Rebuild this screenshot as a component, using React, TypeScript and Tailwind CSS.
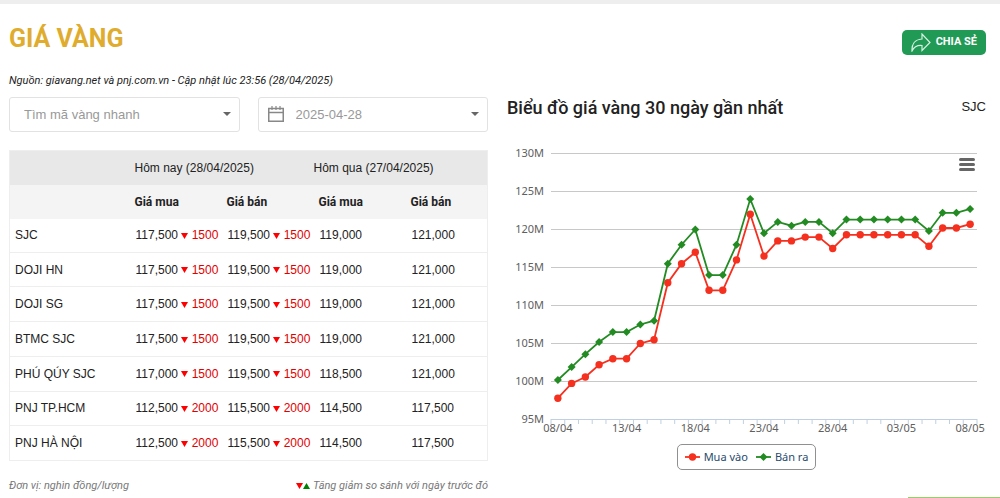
import { useState } from "react";

const GOLD = [
  { name: "SJC", buy: "117,500", sell: "119,500", diff: 1500, oldBuy: "119,000", oldSell: "121,000" },
  { name: "DOJI HN", buy: "117,500", sell: "119,500", diff: 1500, oldBuy: "119,000", oldSell: "121,000" },
  { name: "DOJI SG", buy: "117,500", sell: "119,500", diff: 1500, oldBuy: "119,000", oldSell: "121,000" },
  { name: "BTMC SJC", buy: "117,500", sell: "119,500", diff: 1500, oldBuy: "119,000", oldSell: "121,000" },
  { name: "PHÚ QÚY SJC", buy: "117,000", sell: "119,500", diff: 1500, oldBuy: "118,500", oldSell: "121,000" },
  { name: "PNJ TP.HCM", buy: "112,500", sell: "115,500", diff: 2000, oldBuy: "114,500", oldSell: "117,500" },
  { name: "PNJ HÀ NỘI", buy: "112,500", sell: "115,500", diff: 2000, oldBuy: "114,500", oldSell: "117,500" },
];

const BUY = [
  97.8, 99.75, 100.6, 102.2, 103, 103, 105, 105.5, 113, 115.5, 117, 112, 112, 116, 122, 116.5, 118.5,
  118.5, 119, 119, 117.5, 119.3, 119.3, 119.3, 119.3, 119.3, 119.3, 117.8, 120.2, 120.2, 120.7,
];
const SELL = [
  100.2, 101.9, 103.6, 105.2, 106.5, 106.5, 107.5, 108, 115.5, 118, 120, 114, 114, 118, 124, 119.5, 121,
  120.5, 121, 121, 119.5, 121.3, 121.3, 121.3, 121.3, 121.3, 121.3, 119.8, 122.2, 122.2, 122.7,
];
const LEVELS = [130, 125, 120, 115, 110, 105, 100, 95];
const DAYS = ["08/04", "13/04", "18/04", "23/04", "28/04", "03/05", "08/05"];

const LEFT = 44;
const WIDTH = 426;
const STEP = WIDTH / BUY.length;
const px = (i: number) => LEFT + STEP * (i + 0.5);
const py = (value: number) => 13.5 + (130 - value) * 7.6;
const line = (data: number[]) => data.map((v, i) => `${px(i)},${py(v)}`).join(" ");

const Diamond = ({ x, y }: { x: number; y: number }) => (
  <path d={`M${x} ${y - 4}l4 4l-4 4l-4 -4z`} fill="#228b22" />
);

const Down = () => (
  <svg viewBox="0 0 7 6" className="inline-block w-[7px] h-[6px]" aria-hidden="true">
    <path d="M0 0h7L3.5 6z" fill="#f00" />
  </svg>
);

const Up = () => (
  <svg viewBox="0 0 7 6" className="inline-block w-[7px] h-[6px]" aria-hidden="true">
    <path d="M0 6h7L3.5 0z" fill="green" />
  </svg>
);

const Caret = () => (
  <svg viewBox="0 0 8 4" className="absolute right-[9px] top-[15px] w-2 h-1 pointer-events-none">
    <path d="M0 0h8L4 4z" fill="#666" />
  </svg>
);

const Price = ({ value, diff }: { value: string; diff: number }) => (
  <td className="pl-[6px] whitespace-nowrap">
    {value} <Down /> <span className="text-[#e00000]">{diff}</span>
  </td>
);

const Filters = () => {
  const [code, setCode] = useState("");
  const [date, setDate] = useState("2025-04-28");
  return (
    <div className="grid grid-cols-2 gap-[18px] mt-2">
      <div className="relative">
        <select
          aria-label="Tìm mã vàng nhanh"
          value={code}
          onChange={(e) => setCode(e.target.value)}
          className="appearance-none w-full h-[35px] pl-[14px] border border-[#e2e2e2] rounded-[3px] bg-white text-[13px] text-[#999]"
        >
          <option value="">Tìm mã vàng nhanh</option>
          {GOLD.map((item) => (
            <option key={item.name}>{item.name}</option>
          ))}
        </select>
        <Caret />
      </div>
      <div className="relative">
        <svg viewBox="0 0 16 16" className="absolute left-[10px] top-[9px] size-4" fill="none" stroke="#888">
          <path d="M0.75 2.5h14.5v12.75H0.75z" strokeWidth="1.5" />
          <path d="M1 6.5h14" strokeWidth="1.5" />
          <path d="M4 0v4M8 0v4M12 0v4" strokeWidth="1.2" />
        </svg>
        <select
          aria-label="Ngày"
          value={date}
          onChange={(e) => setDate(e.target.value)}
          className="appearance-none w-full h-[35px] pl-[37px] border border-[#e2e2e2] rounded-[3px] bg-transparent text-[13px] text-[#999]"
        >
          <option>2025-04-28</option>
          <option>2025-04-27</option>
        </select>
        <Caret />
      </div>
    </div>
  );
};

const GoldTable = () => (
  <table className="table-fixed w-full h-[311px] mt-[18px] text-left text-xs text-[#222] border border-[#eee]">
    <colgroup>
      <col className="w-[120px]" />
      <col className="w-[92px]" />
      <col className="w-[92px]" />
      <col className="w-[92px]" />
      <col />
    </colgroup>
    <thead>
      <tr className="h-[34px] bg-[#e8e8e8]">
        <td></td>
        <th colSpan={2} className="pl-[5px] font-normal">Hôm nay (28/04/2025)</th>
        <th colSpan={2} className="font-normal">Hôm qua (27/04/2025)</th>
      </tr>
      <tr className="h-[34px] bg-[#f4f4f4] font-[Roboto]">
        <td></td>
        <th className="pl-[5px]">Giá mua</th>
        <th className="pl-[5px]">Giá bán</th>
        <th className="pl-[5px]">Giá mua</th>
        <th className="pl-[5px]">Giá bán</th>
      </tr>
    </thead>
    <tbody>
      {GOLD.map((item) => (
        <tr key={item.name} className="border-b border-[#eee]">
          <th className="pl-[5px] font-normal">{item.name}</th>
          <Price value={item.buy} diff={item.diff} />
          <Price value={item.sell} diff={item.diff} />
          <td className="pl-[6px]">{item.oldBuy}</td>
          <td className="pl-[6px]">{item.oldSell}</td>
        </tr>
      ))}
    </tbody>
  </table>
);

const Chart = () => (
  <div className="relative mt-[21px]">
    <svg viewBox="0 0 479 300" className="block w-full font-['Noto_Sans']" role="img" aria-label="Giá vàng 30 ngày">
      {LEVELS.map((level) => (
        <g key={level}>
          <path
            d={`M${LEFT} ${Math.round(py(level)) - 0.5}h${WIDTH}`}
            stroke={level === 95 ? "#c0d0e0" : "#c8c8c8"}
            strokeWidth="1"
          />
          <text x={37} y={py(level) + 3.5} textAnchor="end" fontSize="11" fill="#606060">
            {level}M
          </text>
        </g>
      ))}
      {Array.from({ length: BUY.length + 1 }, (_, i) => (
        <path key={i} d={`M${LEFT + STEP * i} 279v5`} stroke="#c0d0e0" />
      ))}
      {DAYS.map((day, i) => (
        <text key={day} x={px(i * 5)} y={292} textAnchor="middle" fontSize="11" fill="#606060">
          {day}
        </text>
      ))}
      <polyline points={line(BUY)} fill="none" stroke="#f5301f" strokeWidth="1.8" />
      {BUY.map((v, i) => (
        <circle key={i} cx={px(i)} cy={py(v)} r="3.7" fill="#f5301f" />
      ))}
      <polyline points={line(SELL)} fill="none" stroke="#228b22" strokeWidth="1.8" />
      {SELL.map((v, i) => (
        <Diamond key={i} x={px(i)} y={py(v)} />
      ))}
    </svg>
    <button aria-label="Menu" className="absolute right-[11px] top-[18px] flex flex-col gap-[2px]">
      <span className="w-4 h-[3px] rounded-full bg-[#666]"></span>
      <span className="w-4 h-[3px] rounded-full bg-[#666]"></span>
      <span className="w-4 h-[3px] rounded-full bg-[#666]"></span>
    </button>
    <div className="flex justify-center mt-1">
      <div className="flex items-center gap-2 h-[26px] px-[7px] border border-[#909090] rounded-[5px] text-[11px] text-[#274b6d] font-['Noto_Sans']">
        <button className="flex items-center gap-1">
          <svg viewBox="0 0 15 8" className="w-[15px] h-2">
            <path d="M0 4h15" stroke="#f5301f" strokeWidth="1.8" />
            <circle cx="7.5" cy="4" r="3.7" fill="#f5301f" />
          </svg>
          Mua vào
        </button>
        <button className="flex items-center gap-1">
          <svg viewBox="0 0 15 8" className="w-[15px] h-2">
            <path d="M0 4h15" stroke="#228b22" strokeWidth="1.8" />
            <Diamond x={7.5} y={4} />
          </svg>
          Bán ra
        </button>
      </div>
    </div>
  </div>
);

const App = () => {
  return (
    <div className="relative min-h-screen bg-white border-t-4 border-[#eee] pl-[9px] pr-[14px] font-['Liberation_Sans',sans-serif] text-[#222]">
      <div className="flex items-center justify-between h-[69px]">
        <h1 className="text-[25px] font-bold text-[#e0ac2e] font-[Roboto]">GIÁ VÀNG</h1>
        <button className="flex items-center gap-[5px] h-[25px] mt-2 px-[9px] rounded-[5px] bg-[#219a55] text-white text-[11px] font-bold font-[Roboto]">
          <svg viewBox="0 0 20 19" className="w-5 h-[19px]" fill="none" stroke="#d5f0e0" strokeWidth="1.2">
            <path d="M1 18C0.500 11 4 6.500 11 6V1L19 9.500L11 17.500V12.500C6 12 3 14 1 18z" />
          </svg>
          CHIA SẺ
        </button>
      </div>
      <div className="grid grid-cols-2 gap-[19px]">
        <div>
          <p className="italic text-[11px] leading-4 font-[Roboto]">
            Nguồn: giavang.net và pnj.com.vn - Cập nhật lúc 23:56 (28/04/2025)
          </p>
          <Filters />
          <GoldTable />
          <div className="flex justify-between mt-[17px] italic text-[11px] leading-4 text-[#777] font-[Roboto]">
            <p>Đơn vị: nghìn đồng/lượng</p>
            <p>
              <Down />
              <Up /> Tăng giảm so sánh với ngày trước đó
            </p>
          </div>
        </div>
        <div className="pt-[22px]">
          <div className="flex items-center justify-between h-6">
            <h2 className="text-[18px] font-medium font-[Roboto]">Biểu đồ giá vàng 30 ngày gần nhất</h2>
            <span className="text-[13px]">SJC</span>
          </div>
          <Chart />
        </div>
      </div>
      <div className="absolute bottom-0 right-0 w-[92px] h-px bg-[#9ccc65]"></div>
    </div>
  );
};

export default App;
